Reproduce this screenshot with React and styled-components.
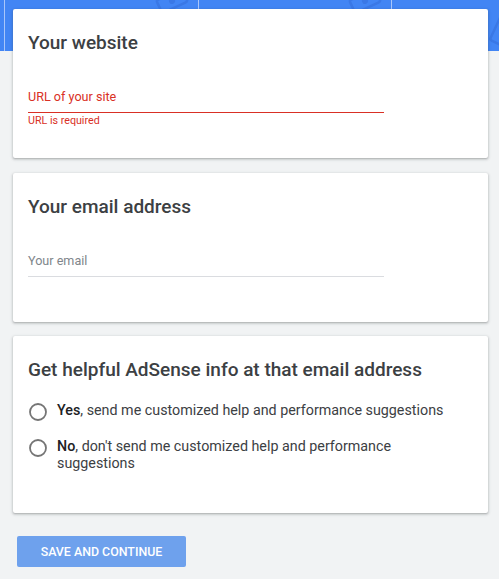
import styled, { createGlobalStyle } from 'styled-components'

const GlobalStyle = createGlobalStyle`
  html, body {
    margin: 0;
    padding: 0;
  }
  body {
    background: #f1f3f4;
    font-family: Roboto, "Liberation Sans", Arial, sans-serif;
    color: #3c4043;
  }
`

const Page = styled.div`
  position: relative;
  min-height: 100vh;
  background: linear-gradient(#4285f4 0 51px, #f1f3f4 51px);
  overflow: hidden;
`

const BannerArt = styled.svg`
  position: absolute;
  top: 0;
  left: 0;
  width: 100%;
  height: 51px;
`

const Content = styled.div`
  position: relative;
  display: flex;
  flex-direction: column;
  padding: 9px 11px 12px 13px;
`

const Card = styled.section`
  background: #fff;
  border-radius: 2px;
  box-shadow: 0 1px 2px rgba(60, 64, 67, 0.3), 0 1px 3px 1px rgba(60, 64, 67, 0.12);
  padding: 22px 15px ${(p) => p.$bottom || 30}px;
  margin-bottom: ${(p) => p.$gap || 0}px;
`

const Heading = styled.h2`
  margin: 0 0 ${(p) => p.$space}px;
  font-size: 19px;
  line-height: 24px;
  font-weight: 500;
  color: #3c4043;
`

const Field = styled.div`
  width: 356px;
  padding-bottom: 5px;
  font-size: 12.6px;
  line-height: 20px;
  color: ${(p) => (p.$error ? '#d93025' : '#80868b')};
  border-bottom: 1px solid ${(p) => (p.$error ? '#d93025' : '#dadce0')};
`

const Helper = styled.div`
  margin-top: 1px;
  min-height: 14px;
  font-size: 10.7px;
  line-height: 14px;
  color: #d93025;
`

const Options = styled.div`
  display: flex;
  flex-direction: column;
  gap: 17px;
`

const Option = styled.label`
  display: flex;
  align-items: flex-start;
  gap: 10px;
  font-size: 14.3px;
  line-height: 17px;
  color: #3c4043;
  cursor: pointer;

  span {
    max-width: 400px;
  }

  b {
    font-weight: 500;
    color: #202124;
  }
`

const RadioRing = styled.svg`
  flex: none;
  margin: 1px 0 0 1px;
`

const SaveButton = styled.button`
  align-self: flex-start;
  margin: 23px 0 0 4px;
  width: 169px;
  height: 31px;
  border: none;
  border-radius: 2px;
  background: #6ea1ed;
  color: #fff;
  font-family: inherit;
  font-size: 12.4px;
  font-weight: 500;
  text-transform: uppercase;
  cursor: pointer;
`

function Bill({ x, y, angle }) {
  return (
    <g transform={`translate(${x} ${y}) rotate(${angle})`} fill="none" stroke="#3a78e6" strokeWidth="2.5">
      <rect x="-14" y="-7" width="28" height="14" rx="2" />
      <circle cx="0" cy="0" r="3" fill="#3a78e6" stroke="none" />
    </g>
  )
}

function Radio({ children }) {
  return (
    <Option>
      <RadioRing width="18" height="18" viewBox="0 0 18 18">
        <circle cx="9" cy="9" r="8" fill="none" stroke="#757575" strokeWidth="1.8" />
      </RadioRing>
      <span>{children}</span>
    </Option>
  )
}

export default function App() {
  return (
    <Page>
      <GlobalStyle />
      <BannerArt viewBox="0 0 499 51" preserveAspectRatio="xMinYMin slice">
        <g stroke="#a9c6fa" strokeWidth="1">
          <line x1="4.5" y1="0" x2="4.5" y2="51" />
          <line x1="198.5" y1="0" x2="198.5" y2="51" />
          <line x1="391.5" y1="0" x2="391.5" y2="51" />
        </g>
        <Bill x={172} y={1} angle={-25} />
        <Bill x={365} y={1} angle={-25} />
        <Bill x={502} y={30} angle={-65} />
      </BannerArt>
      <Content>
        <Card $gap={15}>
          <Heading $space={32}>Your website</Heading>
          <Field $error>URL of your site</Field>
          <Helper>URL is required</Helper>
        </Card>
        <Card $gap={14}>
          <Heading $space={32}>Your email address</Heading>
          <Field>Your email</Field>
          <Helper />
        </Card>
        <Card $bottom={41}>
          <Heading $space={20}>Get helpful AdSense info at that email address</Heading>
          <Options>
            <Radio>
              <b>Yes</b>, send me customized help and performance suggestions
            </Radio>
            <Radio>
              <b>No</b>, don't send me customized help and performance suggestions
            </Radio>
          </Options>
        </Card>
        <SaveButton>Save and continue</SaveButton>
      </Content>
    </Page>
  )
}
